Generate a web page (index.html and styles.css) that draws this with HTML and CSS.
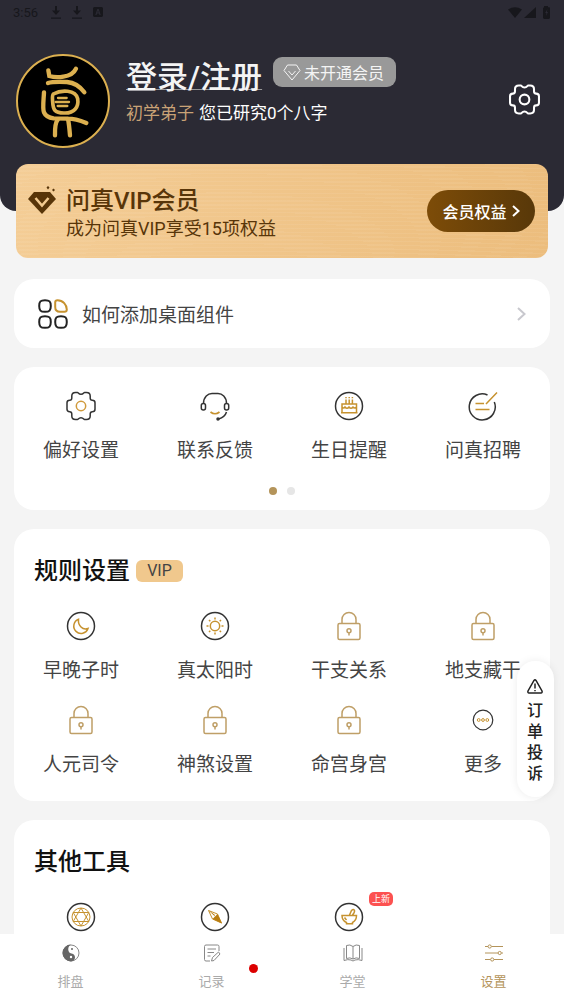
FILE: index.html
```html
<!DOCTYPE html>
<html lang="zh-CN">
<head>
  <meta charset="UTF-8">
  <title>设置</title>
  <meta name="viewport" content="width=device-width, initial-scale=1.0">
  <link rel="stylesheet" href="styles.css">
</head>
<body>

<!-- Shared icons -->
<svg class="sprite" aria-hidden="true">
  <symbol id="gear" viewBox="0 0 30 30">
    <path d="M9.500 1.500H11.500C12.300 1.500 12.500 3.300 15 3.300S17.700 1.500 18.500 1.500H20.500C22.800 1.500 24.200 3 24.200 5V7C24.200 8.600 25 9.300 26.300 9.300C28.200 9.300 29 10.300 29 11.800V18.200C29 19.700 28.200 20.700 26.300 20.700C25 20.700 24.200 21.400 24.200 23V25C24.200 27 22.800 28.500 20.500 28.500H18.500C17.700 28.500 17.500 26.700 15 26.700S12.300 28.500 11.500 28.500H9.500C7.200 28.500 5.800 27 5.800 25V23C5.800 21.400 5 20.700 3.700 20.700C1.800 20.700 1 19.700 1 18.200V11.800C1 10.300 1.800 9.300 3.700 9.300C5 9.300 5.800 8.600 5.800 7V5C5.800 3 7.200 1.500 9.500 1.500Z"/>
    <circle class="accent" cx="15" cy="15" r="4.700"/>
  </symbol>
  <symbol id="lock" viewBox="0 0 30 30">
    <rect x="4" y="12.500" width="22" height="16" rx="1.500"/>
    <path d="M8 12.500V8.500a7 7 0 0 1 14 0V12.500"/>
    <circle cx="15" cy="19.700" r="2"/>
    <path d="M15 21.700V24.500"/>
  </symbol>
  <symbol id="download" viewBox="0 0 10 13">
    <path d="M4 0H6V4.500H9L5 9L1 4.500H4ZM0 11.500H10V12.800H0Z"/>
  </symbol>
</svg>

<div class="app">
  <main class="content">
    <header class="header">
      <div class="status">
        <span>3:56</span>
        <svg width="10" height="13"><use href="#download"/></svg>
        <svg width="10" height="13"><use href="#download"/></svg>
        <svg width="10" height="10" viewBox="0 0 10 10"><path fill-rule="evenodd" d="M1 0H9L10 1V9L9 10H1L0 9V1ZM4.300 2L2.300 8H3.500L4 6.600H6L6.500 8H7.700L5.700 2ZM4.300 5.500L5 3.400L5.700 5.500Z"/></svg>
        <svg class="signals" width="42" height="13" viewBox="0 0 42 13">
          <path d="M0 3.500Q7 -1 14 3.500L7 12Z"/>
          <path d="M16 12H28V1Z"/>
          <path fill-rule="evenodd" d="M36 1.200V0H40V1.200H41.500L42 2V12L41 13H36L35 12V2L36 1.200ZM39.500 3L37.200 7H38.500L38 10L40 6H38.800Z"/>
        </svg>
      </div>
      <div class="profile">
        <svg class="avatar" viewBox="18 12 282 282" aria-hidden="true">
          <circle cx="159" cy="153" r="138" fill="#000"/>
          <g fill="none" stroke="#dcb050" stroke-width="13" stroke-linecap="round">
            <circle cx="159" cy="153" r="138" stroke-width="6"/>
            <path d="M115 61L118 78Q137 84 160 80Q189 76 198 56"/>
            <path d="M114 99C129 94 150 95 171 96C195 98 212 112 223 127"/>
            <path d="M102 127C101 149 97 175 102 187Q108 202 131 205L174 206Q196 206 229 219"/>
            <path d="M130 132C153 119 197 118 203 146C207 171 193 189 165 189C132 190 129 177 128 155C127 143 126 136 130 132Z" stroke-width="11"/>
            <path d="M144 144H170M137 156H177M143 168H172" stroke-width="7"/>
            <path d="M144 208Q134 219 135 256M174 207Q177 220 180 256"/>
          </g>
        </svg>
        <div class="user">
          <div class="user-row">
            <a class="login" href="#">登录/注册</a>
            <button class="member" type="button">
              <svg width="18" height="17" viewBox="0 0 18 17" aria-hidden="true"><path d="M4.500 1H13.500L17 6.500L9 16L1 6.500ZM5.500 7L9 11L12.500 7"/></svg>
              未开通会员
            </button>
          </div>
          <p class="level"><span>初学弟子</span>您已研究0个八字</p>
        </div>
        <button class="setting" type="button" aria-label="设置"><svg class="white-gear"><use href="#gear"/></svg></button>
      </div>
    </header>

    <!-- VIP banner -->
    <section class="vip">
      <svg class="vip-icon" viewBox="0 0 28 28" aria-hidden="true">
        <path fill="#583509" d="M6 6H22L28 13L14 28L0 13Z"/>
        <path fill="none" stroke="#f2ca90" stroke-width="2.500" d="M7.500 12L14 19.500L20.500 12"/>
        <path fill="#583509" d="M11 11H17L14 14.500ZM18.500 1.500L20 0L21.500 1.500L20 3.500ZM24 4L25.500 2.500L27 4L25.500 5.500Z"/>
      </svg>
      <div class="vip-text">
        <h2>问真VIP会员</h2>
        <p>成为问真VIP享受15项权益</p>
      </div>
      <button class="vip-btn" type="button">会员权益
        <svg width="8" height="12" viewBox="0 0 8 12" aria-hidden="true"><path d="M1 1L6.500 6L1 11"/></svg>
      </button>
    </section>

    <a class="card widget" href="#">
      <svg width="30" height="30" viewBox="0 0 30 30" aria-hidden="true">
        <path class="dark" d="M7 1.200C11.500 1.200 12.800 2.500 12.800 7S11.500 12.800 7 12.800S1.200 11.500 1.200 7S2.500 1.200 7 1.200ZM7 17.200C11.500 17.200 12.800 18.500 12.800 23S11.500 28.800 7 28.800S1.200 27.500 1.200 23S2.500 17.200 7 17.200ZM23 17.200C27.500 17.200 28.800 18.500 28.800 23S27.500 28.800 23 28.800S17.200 27.500 17.200 23S18.500 17.200 23 17.200Z"/>
        <path class="gold" d="M19.500 1.200C25 1.200 28.800 6 28.800 10.500Q28.800 12.800 26.500 12.800H22Q17.200 12.800 17.200 8V3.500Q17.200 1.200 19.500 1.200Z"/>
      </svg>
      <span>如何添加桌面组件</span>
      <svg class="arrow" width="9" height="14" viewBox="0 0 9 14" aria-hidden="true"><path d="M1 1L7.500 7L1 13"/></svg>
    </a>

    <section class="card">
      <div class="grid">
        <a class="item" href="#">
          <svg class="gear-icon"><use href="#gear"/></svg>
          <span>偏好设置</span>
        </a>
        <a class="item" href="#">
          <svg viewBox="0 0 30 30">
            <path d="M3.500 12.500C3.500 6 8 2.500 12 2.500H18C22 2.500 26.500 6 26.500 12.500"/>
            <rect x="1.300" y="12.500" width="4.200" height="6.500" rx="2"/>
            <rect x="24.500" y="12.500" width="4.200" height="6.500" rx="2"/>
            <path d="M26.500 21Q25 26 18.500 28"/>
            <circle cx="18" cy="28" r="1" fill="#333"/>
            <path class="gold" stroke-width="1.700" d="M10.500 21Q15 24.500 19.500 21"/>
          </svg>
          <span>联系反馈</span>
        </a>
        <a class="item" href="#">
          <svg viewBox="0 0 30 30">
            <circle cx="15" cy="15" r="13.500"/>
            <path class="gold" d="M8 21.500V13H22.500V21.500M7 21.800H23.500M8 16Q9.500 18 11 16Q13 18.500 15 16Q17 18.500 19 16Q21 18 22.500 16M12 8.500V12.500M15.200 8.500V12.500M18.400 8.500V12.500M12 6V7.200M15.200 6V7.200M18.400 6V7.200"/>
          </svg>
          <span>生日提醒</span>
        </a>
        <a class="item" href="#">
          <svg viewBox="0 0 30 30">
            <path d="M19.500 4A13 13 0 1 0 26.300 11"/>
            <path class="gold" d="M29 1.500L18 13M7.500 12.500H16M7.500 18.500H21.500"/>
          </svg>
          <span>问真招聘</span>
        </a>
      </div>
      <div class="dots"><i class="on"></i><i></i></div>
    </section>

    <section class="card">
      <h2 class="title">规则设置 <span class="tag">VIP</span></h2>
      <div class="grid">
        <a class="item" href="#">
          <svg viewBox="0 0 30 30">
            <circle cx="15" cy="15" r="13.500"/>
            <path class="gold" d="M12.500 8.300A7.300 7.300 0 1 0 22 17.500Q18 19 15 16Q12 13 12.500 8.300Z"/>
          </svg>
          <span>早晚子时</span>
        </a>
        <a class="item" href="#">
          <svg viewBox="0 0 30 30">
            <circle cx="15" cy="15" r="13.500"/>
            <circle class="gold" cx="15" cy="15" r="4.700"/>
            <path class="gold" d="M15 6.500V8.500M15 21.500V23.500M6.500 15H8.500M21.500 15H23.500M9 9L10.300 10.300M19.700 19.700L21 21M21 9L19.700 10.300M10.300 19.700L9 21"/>
          </svg>
          <span>真太阳时</span>
        </a>
        <a class="item" href="#"><svg class="lock"><use href="#lock"/></svg><span>干支关系</span></a>
        <a class="item" href="#"><svg class="lock"><use href="#lock"/></svg><span>地支藏干</span></a>
        <a class="item" href="#"><svg class="lock"><use href="#lock"/></svg><span>人元司令</span></a>
        <a class="item" href="#"><svg class="lock"><use href="#lock"/></svg><span>神煞设置</span></a>
        <a class="item" href="#"><svg class="lock"><use href="#lock"/></svg><span>命宫身宫</span></a>
        <a class="item" href="#">
          <svg viewBox="0 0 30 30">
            <circle cx="15" cy="15" r="9.800" stroke-width="1.200"/>
            <g class="gold thin"><circle cx="10.700" cy="15" r="1.400"/><circle cx="15" cy="15" r="1.400"/><circle cx="19.300" cy="15" r="1.400"/></g>
          </svg>
          <span>更多</span>
        </a>
      </div>
    </section>

    <section class="card">
      <h2 class="title">其他工具</h2>
      <div class="grid">
        <a class="item" href="#" aria-label="星盘">
          <svg viewBox="0 0 30 30">
            <circle cx="15" cy="15" r="13.500"/>
            <g class="gold thin"><circle cx="15" cy="15" r="9"/><path d="M15 6L22.800 19.500H7.200ZM15 24L7.200 10.500H22.800Z"/></g>
          </svg>
        </a>
        <a class="item" href="#" aria-label="罗盘">
          <svg viewBox="0 0 30 30">
            <circle cx="15" cy="15" r="13.500"/>
            <path class="gold thin" d="M8.500 8.500L17.500 12L21.500 21L12.500 17Z"/>
            <path fill="#b97d10" stroke="none" d="M17.500 12L22 21.500L12.500 17L15 14.500ZM8 8L14.500 12.500L15 14.500Z"/>
          </svg>
        </a>
        <a class="item" href="#" aria-label="药方">
          <svg viewBox="0 0 30 30">
            <circle cx="15" cy="15" r="13.500"/>
            <path class="gold" d="M8 13.500H22.500Q22.500 18.500 18.500 20.500V21.800H12.500V20.500Q8 18.500 8 13.500ZM15.500 13L17.500 8.500Q19.500 6.500 20.500 8.500Q21 10 18.500 13M10.500 15.500L12.500 18"/>
          </svg>
          <em class="new">上新</em>
        </a>
      </div>
    </section>
  </main>

  <button class="complain" type="button">
    <svg width="16" height="15" viewBox="0 0 16 15" aria-hidden="true"><path d="M7 1.500Q8 0 9 1.500L15 12Q15.500 14 14 14H2Q.5 14 1 12ZM8 4.500V9.500M8 11V12.200"/></svg>
    <span>订单投诉</span>
  </button>

  <!-- Bottom bar -->
  <nav class="tabs">
    <a href="#">
      <svg viewBox="0 0 18 18">
        <circle cx="9" cy="9" r="8"/>
        <path fill="#666" stroke="none" d="M9 .5A8.500 8.500 0 0 0 9 17.500C14 17 14.500 10.500 9.500 9.500C5 8.500 5.500 2 9 .5Z"/>
        <circle cx="10" cy="5" r="1" fill="#666" stroke="none"/><circle cx="9" cy="13" r="1.200" fill="#fff" stroke="none"/>
      </svg>
      <span>排盘</span>
    </a>
    <a href="#">
      <svg viewBox="0 0 18 18"><path d="M16 7V2.500Q16 1 14.500 1H3Q1.500 1 1.500 2.500V15.500Q1.500 17 3 17H7M4.500 5H13M4.500 8.500H11M4.500 12H7.500M9.500 13.500L15.500 8L17 10L11 16.500L8.500 17Z"/></svg>
      <span>记录</span>
      <i class="red-dot"></i>
    </a>
    <a href="#">
      <svg class="book" viewBox="0 0 20 18"><path d="M10 2.500Q7 0 3.500 1.500V14.500Q7 13 10 15Q13 13 16.500 14.500V1.500Q13 0 10 2.500ZM10 2.500V15M1 4V16.500Q5 15 8 16L10 17L12 16Q15 15 19 16.500V4"/></svg>
      <span>学堂</span>
    </a>
    <a class="active" href="#">
      <svg viewBox="0 0 18 18"><path d="M0 2.500H3M6.500 2.500H18M0 9H13M16.500 9H18M0 15.500H5.500M9 15.500H18"/><circle cx="4.700" cy="2.500" r="1.600"/><circle cx="14.700" cy="9" r="1.600"/><circle cx="7.200" cy="15.500" r="1.600"/></svg>
      <span>设置</span>
    </a>
  </nav>
</div>

</body>
</html>
```

FILE: styles.css
```css
* { box-sizing: border-box; }
body { margin: 0; font-family: Roboto, "Noto Sans CJK SC", sans-serif; background: #f4f4f4; color: #444; }
a { color: inherit; text-decoration: none; }
button { padding: 0; border: none; font-family: inherit; cursor: pointer; }
h2, p { margin: 0; }
svg { display: block; flex: none; fill: none; }
.sprite { position: absolute; width: 0; height: 0; }
.app { position: relative; display: flex; flex-direction: column; height: 100vh; overflow: hidden; }
.content { flex: 1; min-height: 0; overflow-y: auto; scrollbar-width: none; }

/* header */
.header { background: #2b2a34; padding: 0 24px 63px 16px; border-radius: 0 0 16px 16px; }
.status { display: flex; align-items: center; gap: 11px; height: 24px; margin: 0 -10px 30px -3px; font-size: 13px; color: #17171c; }
.status svg { fill: #17171c; }
.status .signals { margin-left: auto; }
.status span { margin-right: 2px; }
.profile { display: flex; align-items: center; gap: 16px; height: 94px; }
.avatar { width: 94px; height: 94px; }
.user { flex: 1; padding-bottom: 18px; }
.user-row { display: flex; align-items: center; gap: 11px; }
.login { font-size: 31px; line-height: 42px; font-weight: 500; color: #f4f4f4; text-decoration: underline; text-decoration-color: #999; text-decoration-thickness: 1px; }
.member { display: flex; align-items: center; gap: 3px; height: 30px; padding: 0 12px 0 10px; margin-bottom: 12px; border-radius: 9px; background: #999; color: #f4f4f4; font-size: 16px; }
.member svg { stroke: #f4f4f4; }
.level { font-size: 17px; line-height: 28px; color: #fff; }
.level span { margin-right: 5px; color: #c9a276; }
.setting { background: none; }
.white-gear { width: 31px; height: 31px; stroke: #fff; stroke-width: 2; margin-bottom: 4px; }

/* vip banner */
.vip { position: relative; display: flex; align-items: center; height: 94px; margin: -47px 16px 21px; padding: 0 13px 0 12px; border-radius: 12px; color: #583509; background: repeating-radial-gradient(ellipse 300% 150% at 40% 160%, rgba(255,255,255,0.06) 0 16px, transparent 16px 44px), linear-gradient(100deg, #f4cd96, #ecbd7d); }
.vip-icon { width: 28px; height: 28px; margin: 0 10px 22px 0; }
.vip-text { flex: 1; padding-top: 6px; }
.vip-text h2 { font-size: 24px; line-height: 30px; font-weight: 500; }
.vip-text p { font-size: 18px; line-height: 26px; }
.vip-btn { display: flex; align-items: center; justify-content: center; gap: 5px; width: 108px; height: 42px; border-radius: 21px; font-size: 16px; font-weight: 500; color: #fff; background: linear-gradient(90deg, #7d4c08, #583809); }
.vip-btn svg { stroke: #fff; stroke-width: 2; }

/* cards */
.card { margin: 0 14px 19px; padding: 24px 0 22px; border-radius: 20px; background: #fff; }
.widget { display: flex; align-items: center; gap: 14px; height: 69px; padding: 0 24px; font-size: 19px; }
.widget .arrow { margin-left: auto; stroke: #c8c8ce; stroke-width: 2; }
.dark { stroke: #222; stroke-width: 2; }
.gold { stroke: #c6922f; }
.thin { stroke-width: 1; }
.widget .gold { stroke-width: 2; }
.title { display: flex; align-items: center; gap: 6px; padding: 0 20px; margin-bottom: 22px; font-size: 24px; line-height: 36px; font-weight: 500; color: #111; }
.tag { width: 47px; border-radius: 6px; background: #f0c88d; color: #444; font-size: 16px; line-height: 22px; font-weight: 400; text-align: center; }
.grid { display: grid; grid-template-columns: repeat(4, 1fr); row-gap: 20px; }
.item { position: relative; display: flex; flex-direction: column; align-items: center; gap: 16px; font-size: 19px; line-height: 28px; }
.item svg { width: 30px; height: 30px; stroke: #333; stroke-width: 1.5; }
.accent { stroke: var(--accent, currentColor); }
.gear-icon { --accent: #d09a3c; }
.white-gear { --accent: #fff; }
.item .lock { stroke: #bf9f67; }
.dots { display: flex; justify-content: center; gap: 10px; margin: 22px 0 -7px; }
.dots i { width: 8px; height: 8px; border-radius: 50%; background: #e6e6e6; }
.dots .on { background: #b4945a; }
.new { position: absolute; top: -10px; left: calc(50% + 20px); width: 24px; border-radius: 5px; background: #fc5150; color: #fff; font-size: 9px; line-height: 14px; font-style: normal; text-align: center; }

/* floating button */
.complain { position: absolute; right: 10px; bottom: 207px; width: 37px; padding: 18px 10px 13px; border-radius: 18px; background: #fff; box-shadow: 0 0 8px rgba(0,0,0,0.08); color: #222; font-size: 16px; line-height: 21px; font-weight: 500; }
.complain svg { stroke: #222; stroke-width: 1.5; margin-bottom: 6px; }
.complain span { display: block; width: 16px; word-break: break-all; }

/* bottom bar */
.tabs { display: flex; height: 70px; background: #fff; }
.tabs a { position: relative; flex: 1; display: flex; flex-direction: column; align-items: center; gap: 10px; padding-top: 10px; font-size: 13px; line-height: 20px; color: #aaa; }
.tabs svg { width: 18px; height: 18px; stroke: #888; }
.tabs .book { width: 20px; }
.tabs .active { color: #b4945a; }
.tabs .active svg { stroke: #b4945a; }
.red-dot { position: absolute; top: 30px; right: 24px; width: 9px; height: 9px; border-radius: 50%; background: #dc0000; }
```
